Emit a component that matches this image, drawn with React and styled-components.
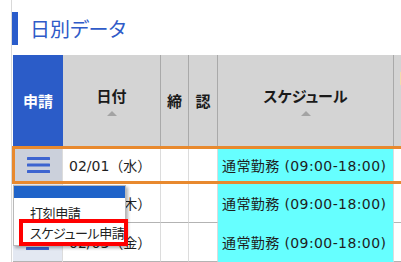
import React from 'react';
import styled, { createGlobalStyle } from 'styled-components';

const Global = createGlobalStyle`
  *, *::before, *::after { box-sizing: border-box; }
  html, body { margin: 0; padding: 0; background: #fff; }
  body {
    font-family: "Noto Sans CJK JP", "Noto Sans", sans-serif;
    width: 401px;
    height: 262px;
    overflow: hidden;
  }
`;

const Page = styled.div`
  width: 401px;
  height: 262px;
  overflow: hidden;
  padding-left: 11px;
`;

const Frame = styled.div`
  border-left: 1px solid #d9d9d9;
  height: 262px;
  width: 460px;
`;

const Heading = styled.h2`
  margin: 0;
  padding-top: 12px;
  height: 45px;
  display: flex;
  align-items: stretch;
  gap: 12px;
  font-size: 20px;
  font-weight: 400;
  color: #2f5bc8;
  font-feature-settings: "palt";
`;

const HeadingBar = styled.span`
  width: 6px;
  background: #2a5ccb;
`;

const HeadingText = styled.span`
  display: flex;
  align-items: center;
  line-height: 1;
`;

const Table = styled.div`
  margin-top: 10px;
  position: relative;
`;

const COLS = (first) => `${first}px 98px 28px 29px 176px 1fr`;

const HeaderRow = styled.div`
  display: grid;
  grid-template-columns: ${COLS(50)};
  height: 91px;
  margin-left: 1px;
`;

const HeadCell = styled.div`
  display: flex;
  flex-direction: column;
  align-items: center;
  justify-content: center;
  background: ${(p) => (p.$primary ? '#2b5cc8' : '#d4d4d4')};
  color: ${(p) => (p.$primary ? '#fff' : '#1a1a1a')};
  border-right: ${(p) => (p.$primary || p.$open ? 'none' : '1px solid #a9a9a9')};
  font-size: 15px;
  font-weight: 700;
  line-height: 20px;
  font-feature-settings: "palt";
`;

const OpenHeadCell = styled(HeadCell)`
  align-items: flex-start;
  justify-content: flex-start;
  padding: 17px 0 0 6px;
`;

const Badge = styled.span`
  width: 14px;
  height: 13px;
  background: #f2dcae;
`;

const SortMark = styled.span`
  margin-top: 5px;
  width: 0;
  height: 0;
  border-left: 5px solid transparent;
  border-right: 5px solid transparent;
  border-bottom: 5px solid #a3a3a3;
`;

const Row = styled.div`
  display: grid;
  grid-template-columns: ${(p) => COLS(p.$selected ? 48 : 50)};
  height: ${(p) => (p.$selected ? 38 : 39)}px;
  ${(p) =>
    p.$selected
      ? 'border: 3px solid #e8892e; border-right: none;'
      : 'margin-left: 1px;'}
`;

const Cell = styled.div`
  display: flex;
  align-items: center;
  padding-left: ${(p) => p.$pad || 0}px;
  background: ${(p) => p.$bg || '#fff'};
  border-right: ${(p) => (p.$open ? 'none' : '1px solid #dcdcdc')};
  border-bottom: ${(p) =>
    p.$flat ? 'none' : `1px solid ${p.$bg || '#b3b3b3'}`};
  font-family: "DejaVu Sans", "Noto Sans CJK JP", sans-serif;
  font-size: 14px;
  letter-spacing: ${(p) => p.$spacing || 0}px;
  color: #1e1e1e;
  white-space: nowrap;
`;

const MenuButton = styled.button`
  border: none;
  padding: 0;
  margin: 0;
  width: 100%;
  height: 100%;
  display: flex;
  align-items: center;
  justify-content: center;
  background: ${(p) => (p.$active ? '#cbd0db' : '#e3e8f2')};
  border-bottom: ${(p) => (p.$active ? 'none' : '1px solid #b3b3b3')};
`;

const Dropdown = styled.div`
  position: absolute;
  left: 1px;
  top: 130px;
  width: 113px;
  background: #fff;
  border: 1px solid #b9b9b9;
  box-shadow: 2px 2px 3px rgba(0, 0, 0, 0.3);
  padding-bottom: 2px;
  z-index: 2;
`;

const DropdownBand = styled.div`
  height: 12px;
  background: #1f63c9;
  margin-bottom: 5px;
`;

const DropdownItem = styled.div`
  position: relative;
  height: 20px;
  line-height: 20px;
  padding-left: 16px;
  font-size: 13px;
  letter-spacing: -0.4px;
  color: #222;
  background: #fff;
  font-feature-settings: "palt";
  white-space: nowrap;
  ${(p) =>
    p.$marked &&
    `&::after {
      content: "";
      position: absolute;
      left: 5px;
      right: -3px;
      top: -4px;
      bottom: -3px;
      border: 4px solid #ff0000;
    }`}
`;

const Hamburger = () => (
  <svg width="23" height="16" viewBox="0 0 23 16">
    <rect x="0" y="0" width="23" height="3" rx="0.6" fill="#3d64d0" />
    <rect x="0" y="6.5" width="23" height="3" rx="0.6" fill="#3d64d0" />
    <rect x="0" y="13" width="23" height="3" rx="0.6" fill="#3d64d0" />
  </svg>
);

const rows = [
  { date: '02/01（水）', selected: true },
  { date: '02/02（木）' },
  { date: '02/03（金）' },
];

export default function App() {
  return (
    <>
      <Global />
      <Page>
        <Frame>
          <Heading>
            <HeadingBar />
            <HeadingText>日別データ</HeadingText>
          </Heading>
          <Table>
            <HeaderRow>
              <HeadCell $primary>申請</HeadCell>
              <HeadCell>
                日付
                <SortMark />
              </HeadCell>
              <HeadCell>締</HeadCell>
              <HeadCell>認</HeadCell>
              <HeadCell>
                スケジュール
                <SortMark />
              </HeadCell>
              <OpenHeadCell $open>
                <Badge />
              </OpenHeadCell>
            </HeaderRow>
            {rows.map((r) => (
              <Row key={r.date} $selected={r.selected}>
                <Cell $flat>
                  <MenuButton $active={r.selected}>
                    <Hamburger />
                  </MenuButton>
                </Cell>
                <Cell $pad={6} $flat={r.selected}>{r.date}</Cell>
                <Cell $flat={r.selected} />
                <Cell $flat={r.selected} />
                <Cell $pad={4} $spacing={0.4} $bg="#66ffff" $flat={r.selected}>
                  通常勤務 (09:00-18:00)
                </Cell>
                <Cell $open $flat={r.selected} />
              </Row>
            ))}
            <Dropdown>
              <DropdownBand />
              <DropdownItem>打刻申請</DropdownItem>
              <DropdownItem $marked>スケジュール申請</DropdownItem>
            </Dropdown>
          </Table>
        </Frame>
      </Page>
    </>
  );
}
